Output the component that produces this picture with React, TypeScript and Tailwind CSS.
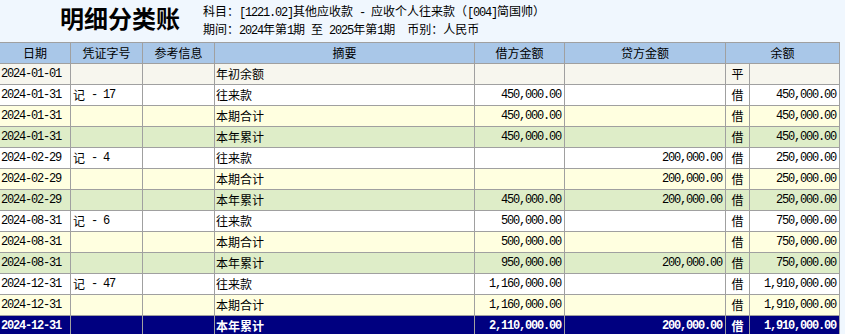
import React from 'react'

type Kind = 'open' | 'entry' | 'period' | 'year' | 'total'

interface Row {
  kind: Kind
  date: string
  voucher?: string
  summary: string
  debit?: string
  credit?: string
  dir: string
  balance?: string
}

const rows: Row[] = [
  { kind: 'open', date: '2024-01-01', summary: '年初余额', dir: '平' },
  { kind: 'entry', date: '2024-01-31', voucher: '17', summary: '往来款', debit: '450,000.00', dir: '借', balance: '450,000.00' },
  { kind: 'period', date: '2024-01-31', summary: '本期合计', debit: '450,000.00', dir: '借', balance: '450,000.00' },
  { kind: 'year', date: '2024-01-31', summary: '本年累计', debit: '450,000.00', dir: '借', balance: '450,000.00' },
  { kind: 'entry', date: '2024-02-29', voucher: '4', summary: '往来款', credit: '200,000.00', dir: '借', balance: '250,000.00' },
  { kind: 'period', date: '2024-02-29', summary: '本期合计', credit: '200,000.00', dir: '借', balance: '250,000.00' },
  { kind: 'year', date: '2024-02-29', summary: '本年累计', debit: '450,000.00', credit: '200,000.00', dir: '借', balance: '250,000.00' },
  { kind: 'entry', date: '2024-08-31', voucher: '6', summary: '往来款', debit: '500,000.00', dir: '借', balance: '750,000.00' },
  { kind: 'period', date: '2024-08-31', summary: '本期合计', debit: '500,000.00', dir: '借', balance: '750,000.00' },
  { kind: 'year', date: '2024-08-31', summary: '本年累计', debit: '950,000.00', credit: '200,000.00', dir: '借', balance: '750,000.00' },
  { kind: 'entry', date: '2024-12-31', voucher: '47', summary: '往来款', debit: '1,160,000.00', dir: '借', balance: '1,910,000.00' },
  { kind: 'period', date: '2024-12-31', summary: '本期合计', debit: '1,160,000.00', dir: '借', balance: '1,910,000.00' },
  { kind: 'total', date: '2024-12-31', summary: '本年累计', debit: '2,110,000.00', credit: '200,000.00', dir: '借', balance: '1,910,000.00' },
]

const rowBg: Record<Kind, string> = {
  open: 'bg-[#f7f6ee]',
  entry: 'bg-white',
  period: 'bg-[#ffffe0]',
  year: 'bg-[#deedc8]',
  total: 'bg-[#000080] text-white font-bold',
}

// ascii segment, SimSun-like half width
const A = ({ children }: { children: React.ReactNode }) => (
  <span className="font-['Liberation_Mono',monospace] text-[12px] tracking-[-1.2px] whitespace-pre">{children}</span>
)

const td = 'h-[21px] p-0 border-r border-b border-[#a0a0a0] overflow-hidden'
const box = 'h-[20px] flex items-center whitespace-nowrap overflow-hidden leading-[20px]'
const mono = "font-['Liberation_Mono',monospace] text-[12px] tracking-[-1.2px]"
const cjk = "font-['Noto_Sans_CJK_SC',sans-serif] text-[12px]"

export default function App() {
  return (
    <div className="w-[845px] h-[334px] overflow-hidden bg-[#f0f7fe] text-black font-['Noto_Sans_CJK_SC',sans-serif]">
      {/* title */}
      <div className="h-[42px] flex pl-[60px]">
        <div className="w-[143px] pt-[3px] text-[24px] font-bold leading-[30px]">明细分类账</div>
        <div className="pt-[3px] text-[12px] leading-[15px]">
          <div>
            科目：<A>[1221.02]</A>其他应收款<A> - </A>应收个人往来款（<A>[004]</A>简国帅）
          </div>
          <div>
            期间：<A>2024</A>年第<A>1</A>期<A> </A>至<A> 2025</A>年第<A>1</A>期<A>  </A>币别：人民币
          </div>
        </div>
      </div>

      {/* ledger */}
      <table className="table-fixed border-separate border-spacing-0 w-[840px] border-t border-[#a0a0a0]">
        <colgroup>
          <col className="w-[71px]" />
          <col className="w-[72px]" />
          <col className="w-[72px]" />
          <col className="w-[260px]" />
          <col className="w-[90px]" />
          <col className="w-[161px]" />
          <col className="w-[24px]" />
          <col className="w-[90px]" />
        </colgroup>
        <thead>
          <tr className="bg-[#a9c7e8]">
            {['日期', '凭证字号', '参考信息', '摘要', '借方金额', '贷方金额'].map((h) => (
              <th key={h} className={`${td} font-normal`}>
                <div className={`${box} ${cjk} justify-center`}>{h}</div>
              </th>
            ))}
            <th colSpan={2} className={`${td} font-normal`}>
              <div className={`${box} ${cjk} justify-center`}>余额</div>
            </th>
          </tr>
        </thead>
        <tbody>
          {rows.map((r, i) => (
            <tr key={i} className={rowBg[r.kind]}>
              <td className={td}>
                <div className={`${box} ${mono} pl-px`}>{r.date}</div>
              </td>
              <td className={td}>
                <div className={`${box} pl-[2px]`}>
                  {r.voucher && (
                    <>
                      <span className="text-[12px]">记</span>
                      <span className={`${mono} whitespace-pre`}>{` - ${r.voucher}`}</span>
                    </>
                  )}
                </div>
              </td>
              <td className={td}>
                <div className={box}></div>
              </td>
              <td className={td}>
                <div className={`${box} ${cjk} pl-px`}>{r.summary}</div>
              </td>
              <td className={td}>
                <div className={`${box} ${mono} justify-end pr-[3px]`}>{r.debit}</div>
              </td>
              <td className={td}>
                <div className={`${box} ${mono} justify-end pr-[3px]`}>{r.credit}</div>
              </td>
              <td className={td}>
                <div className={`${box} ${cjk} justify-center`}>{r.dir}</div>
              </td>
              <td className={td}>
                <div className={`${box} ${mono} justify-end pr-[3px]`}>{r.balance}</div>
              </td>
            </tr>
          ))}
        </tbody>
      </table>
    </div>
  )
}
